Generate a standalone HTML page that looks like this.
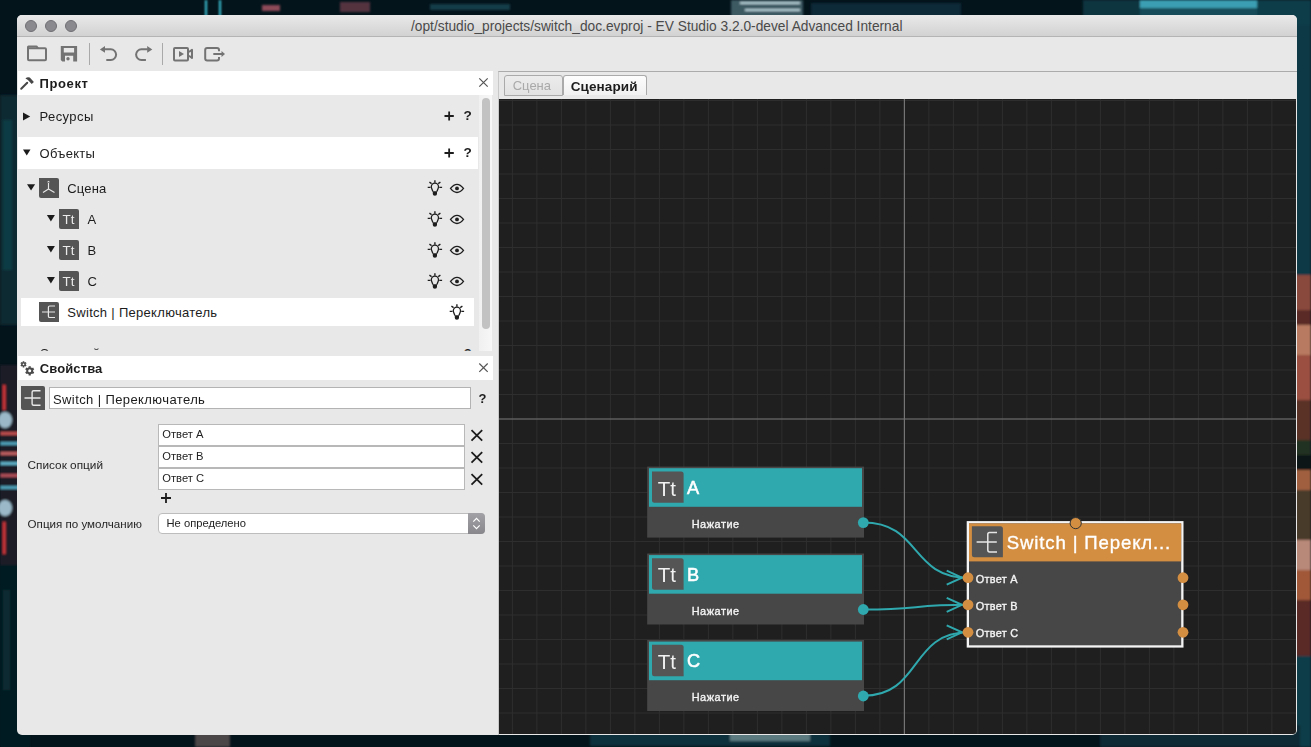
<!DOCTYPE html>
<html><head><meta charset="utf-8">
<style>
*{margin:0;padding:0;box-sizing:border-box}
html,body{width:1311px;height:747px;overflow:hidden}
body{position:relative;font-family:"Liberation Sans",sans-serif;background:#04151c}
.a{position:absolute}
.t{position:absolute;white-space:nowrap;line-height:1;color:#1c1c1c}
svg{position:absolute;left:0;top:0;overflow:visible}
</style></head><body>
<!-- background photo approximation -->
<svg width="1311" height="747" style="left:0;top:0">
  <defs>
    <filter id="blur2" x="-10%" y="-10%" width="120%" height="120%"><feGaussianBlur stdDeviation="1.2"/></filter>
  </defs>
  <rect width="1311" height="747" fill="#04141b"/>
  <g filter="url(#blur2)">
    <!-- left strip -->
    <rect x="0" y="95" width="30" height="230" fill="#0a2a33"/>
    <rect x="3" y="120" width="9" height="150" fill="#124a58" opacity="0.5"/>
    <rect x="0" y="365" width="30" height="200" fill="#1a1e28"/>
    <rect x="3" y="385" width="2.5" height="25" fill="#d83838"/>
    <ellipse cx="5" cy="420" rx="7" ry="8" fill="#9ab8c8"/>
    <rect x="0" y="432" width="30" height="3" fill="#c05050"/>
    <rect x="0" y="442" width="30" height="3" fill="#50a0b8"/>
    <rect x="0" y="452" width="30" height="3" fill="#c06060"/>
    <rect x="0" y="462" width="30" height="3" fill="#60b0c8"/>
    <rect x="0" y="474" width="30" height="3" fill="#b05058"/>
    <rect x="0" y="486" width="30" height="3" fill="#50a0b8"/>
    <ellipse cx="5" cy="508" rx="7" ry="8" fill="#9ab8c8"/>
    <rect x="3" y="522" width="2.5" height="32" fill="#d83838"/>
    <rect x="0" y="565" width="30" height="182" fill="#051a21"/>
    <rect x="3" y="590" width="7" height="100" fill="#0e3a46" opacity="0.5"/>
    <!-- right strip -->
    <rect x="1285" y="0" width="26" height="275" fill="#0c3844"/>
    <rect x="1285" y="275" width="26" height="35" fill="#8a4a3c"/>
    <rect x="1285" y="310" width="26" height="15" fill="#5a2a28"/>
    <rect x="1285" y="325" width="26" height="30" fill="#b87a60"/>
    <rect x="1285" y="355" width="26" height="45" fill="#9a5040"/>
    <rect x="1285" y="400" width="26" height="40" fill="#5a3028"/>
    <rect x="1285" y="440" width="26" height="15" fill="#203024"/>
    <rect x="1285" y="455" width="26" height="15" fill="#101818"/>
    <rect x="1285" y="470" width="26" height="20" fill="#a06040"/>
    <rect x="1285" y="490" width="26" height="50" fill="#4a3a2a"/>
    <rect x="1285" y="540" width="26" height="30" fill="#b88878"/>
    <rect x="1285" y="570" width="26" height="30" fill="#a05838"/>
    <rect x="1285" y="600" width="26" height="56" fill="#5a2a28"/>
    <rect x="1285" y="656" width="26" height="91" fill="#0d3c48"/>
    <!-- top strip -->
    <rect x="205" y="0" width="2" height="25" fill="#3cc8dc"/>
    <rect x="219" y="0" width="2" height="25" fill="#3cc8dc"/>
    <rect x="262" y="5" width="18" height="6" fill="#b05868" opacity="0.8"/>
    <rect x="340" y="2" width="30" height="10" fill="#8a4a58" opacity="0.6"/>
    <rect x="430" y="4" width="80" height="6" fill="#17505e" opacity="0.7"/>
    <rect x="731" y="0" width="72" height="25" fill="#3e5a64"/>
    <rect x="740" y="2" width="60" height="2" fill="#b8d0d8"/>
    <rect x="745" y="9" width="55" height="2" fill="#b8d0d8"/>
    <rect x="811" y="3" width="150" height="22" fill="#0c2c38"/>
    <rect x="1083" y="0" width="57" height="25" fill="#0d3540"/>
    <rect x="1140" y="0" width="117" height="8" fill="#3a9eb2"/>
    <rect x="1140" y="8" width="117" height="17" fill="#164c5a"/>
    <rect x="1257" y="0" width="54" height="25" fill="#0d3c48"/>
    <!-- bottom strip -->
    <rect x="195" y="725" width="35" height="22" fill="#6a5a5a" opacity="0.7"/>
    <rect x="590" y="725" width="240" height="21" fill="#0e303c"/>
    <rect x="730" y="725" width="80" height="16" fill="#5a7a80"/>
    <rect x="1100" y="725" width="200" height="22" fill="#0a2a34"/>
  </g>
</svg>

<!-- window -->
<div class="a" style="left:17px;top:15px;width:1280px;height:720px;background:#e8e8e8;border-radius:5px 5px 5px 5px;overflow:hidden">
  <div class="a" style="left:0;top:0;width:1280px;height:22px;background:linear-gradient(#e9e9e9,#d2d2d2);border-bottom:1px solid #b4b4b4"></div>
</div>

<!-- traffic lights -->
<div class="a" style="left:25px;top:20px;width:12px;height:12px;border-radius:50%;background:#8a898e;border:1px solid #706f74"></div>
<div class="a" style="left:45px;top:20px;width:12px;height:12px;border-radius:50%;background:#8a898e;border:1px solid #706f74"></div>
<div class="a" style="left:65px;top:20px;width:12px;height:12px;border-radius:50%;background:#8a898e;border:1px solid #706f74"></div>
<div class="t" style="left:411px;top:20px;font-size:13.75px;color:#4a4a4a">/opt/studio_projects/switch_doc.evproj - EV Studio 3.2.0-devel Advanced Internal</div>

<!-- toolbar icons -->
<svg width="1311" height="747" style="left:0;top:0">
  <g fill="none" stroke="#737373" stroke-width="2">
    <!-- folder -->
    <rect x="28" y="48.3" width="18" height="12" rx="1"/>
    <path d="M28 49 V47 Q28 46.5 28.5 46.5 H36.5 L38 48.3" stroke-linejoin="round"/>
    <!-- save -->
    <!-- undo -->
    <path d="M104.5 49.3 H110.8 A5.3 5.3 0 0 1 110.8 59.9 H106.3"/>
    <!-- redo -->
    <path d="M147.7 49.3 H141.4 A5.3 5.3 0 0 0 141.4 59.9 H145.9"/>
    <!-- video -->
    <rect x="174" y="47.9" width="14" height="12.6" rx="1"/>
    <path d="M189 52 L192 49.8 V58 L189 55.8" stroke-linejoin="round"/>
    <!-- export -->
    <path d="M219 51.2 V49.9 Q219 47.9 217 47.9 H207.2 Q205.2 47.9 205.2 49.9 V58.5 Q205.2 60.5 207.2 60.5 H217 Q219 60.5 219 58.5 V56.9"/>
    <path d="M213.3 54 H222"/>
  </g>
  <g fill="#737373">
    <path fill-rule="evenodd" d="M60.8 46 H77.1 V61.5 H73.2 V55.8 H65 V61.5 H62.3 L60.8 60 Z M63.8 48 H74.1 V52.4 H63.8 Z"/>
    <circle cx="68" cy="58.8" r="1.7"/>
    <path d="M99.9 49.4 L105 46 V52.8 Z"/>
    <path d="M152.3 49.4 L147.2 46 V52.8 Z"/>
    <path d="M179 51 L184 54 L179 56.9 Z"/>
    <path d="M225 54 L221.5 51 V57 Z"/>
  </g>
  <rect x="89" y="43" width="1" height="22" fill="#a9a9a9"/>
  <rect x="162" y="43" width="1" height="22" fill="#a9a9a9"/>
</svg>

<!-- ========== Project dock ========== -->
<div class="a" style="left:18px;top:71px;width:475px;height:24px;background:#fff"></div>
<div class="t" style="left:39.5px;top:76.9px;font-size:13px;font-weight:bold;letter-spacing:0.62px">Проект</div>
<div class="a" style="left:18px;top:95px;width:461px;height:42px;background:#e9e9e9"></div>
<div class="a" style="left:18px;top:137px;width:460px;height:32px;background:#fff"></div>
<div class="a" style="left:479px;top:95px;width:13px;height:256px;background:linear-gradient(90deg,#f0f0f0,#f7f7f7)"></div>
<div class="a" style="left:482.2px;top:98px;width:8px;height:231px;border-radius:4px;background:#c2c2c2"></div>
<div class="a" style="left:21px;top:298px;width:453px;height:28px;background:#fff"></div>

<div class="t" style="left:463.6px;top:109.2px;font-size:13.6px;font-weight:bold">?</div>
<div class="t" style="left:463.6px;top:146.2px;font-size:13.6px;font-weight:bold">?</div>
<div class="t" style="left:39.5px;top:110px;font-size:13px;letter-spacing:0.42px">Ресурсы</div>
<div class="t" style="left:39.5px;top:147px;font-size:13px;letter-spacing:0.3px">Объекты</div>
<div class="t" style="left:67.3px;top:181.9px;font-size:13px;letter-spacing:0.15px">Сцена</div>
<div class="t" style="left:87.4px;top:213px;font-size:13px">A</div>
<div class="t" style="left:87.4px;top:244px;font-size:13px">B</div>
<div class="t" style="left:87.4px;top:275px;font-size:13px">C</div>
<div class="t" style="left:67.3px;top:306px;font-size:13px;letter-spacing:0.3px">Switch | Переключатель</div>
<div class="t" style="left:39.5px;top:346.5px;font-size:13px;letter-spacing:0.05px;clip-path:inset(0 0 8.7px 0)">Сценарий</div>
<div class="t" style="left:463.8px;top:346.5px;font-size:13px;font-weight:bold;clip-path:inset(0 0 8.7px 0)">?</div>

<svg width="1311" height="747">
  <!-- hammer -->
  <g stroke="#474747" fill="none" stroke-linecap="round">
    <path d="M21.2 88.8 L27.2 82.8" stroke-width="2"/>
  </g>
  <g fill="#474747">
    <path d="M25.4 78.4 Q27.6 76.4 29.8 77.6 L33.9 82.1 L31.7 84.1 L27.9 80.1 Q26.9 79.2 25.4 78.4 Z"/>
  </g>
  <!-- close x -->
  <g stroke="#555" stroke-width="1.2">
    <path d="M479.3 78.3 L487.7 86.7 M487.7 78.3 L479.3 86.7"/>
  </g>
  <!-- plus ? -->
  <g stroke="#1c1c1c" stroke-width="1.8">
    <path d="M444.5 116 H453.8 M449.15 111.4 V120.6"/>
    <path d="M444.5 153 H453.8 M449.15 148.4 V157.6"/>
    <path d="M161 498 H171 M166 493 V503"/>
  </g>
  <!-- triangles -->
  <g fill="#1c1c1c">
    <path d="M23 112.5 L30.2 116.5 L23 120.5 Z"/>
    <path d="M23 149.6 L30.5 149.6 L26.75 155.5 Z"/>
    <path d="M27 184.3 L35.1 184.3 L31.05 190.6 Z"/>
    <path d="M46.9 215 L54.9 215 L50.9 221.4 Z"/>
    <path d="M46.9 246 L54.9 246 L50.9 252.4 Z"/>
    <path d="M46.9 277 L54.9 277 L50.9 283.4 Z"/>
  </g>
  <!-- tree icons -->
  <path d="M39 178 H57 Q59 178 59 180 V198 H41 Q39 198 39 196 Z" fill="#555555"/><path d="M59 209 H77 Q79 209 79 211 V229 H61 Q59 229 59 227 Z" fill="#555555"/><path d="M59 240 H77 Q79 240 79 242 V260 H61 Q59 260 59 258 Z" fill="#555555"/><path d="M59 271 H77 Q79 271 79 273 V291 H61 Q59 291 59 289 Z" fill="#555555"/><path d="M39 302 H57 Q59 302 59 304 V322 H41 Q39 322 39 320 Z" fill="#555555"/><path d="M21 386 H43 Q45 386 45 388 V410 H23 Q21 410 21 408 Z" fill="#555555"/>
  <g stroke="#e8e8e8" stroke-width="1" fill="none">
    <path d="M48.5 189 V183 M48.5 189 L43 192.5 M48.5 189 L54.5 192.5" stroke-width="1.15"/>
    <path d="M42 312 H55 M55 306 H49.7 Q48.4 306 48.4 307.3 V316.2 Q48.4 317.5 49.7 317.5 H55" stroke-width="1.2"/>
    <path d="M24.5 398 H40.5 M40.5 390.8 H33.6 Q32.1 390.8 32.1 392.3 V403.7 Q32.1 405.2 33.6 405.2 H40.5" stroke-width="1.4"/>
  </g>
  <path d="M46.9 182.2 L48.5 180.8 L50.1 182.2 Z" fill="#e8e8e8"/>
  <g fill="#ebebeb" font-family="Liberation Sans" font-size="13.3" >
    <text x="62.6" y="224.4">Tt</text>
    <text x="62.6" y="255.4">Tt</text>
    <text x="62.6" y="286.4">Tt</text>
  </g>
  <!-- bulbs & eyes -->
  <g id="be" stroke="#1e1e1e" fill="none" stroke-width="1.3"><path d="M434.9 180.2 V182.7 M429.4 182.2 L431.59999999999997 183.6 M440.4 182.2 L438.2 183.6 M427.7 187.39999999999998 H430.5 M442.09999999999997 187.39999999999998 H439.29999999999995" stroke-width="1.4"/><path d="M432.9 191.39999999999998 L431.7 188.5 Q431.29999999999995 187.6 431.29999999999995 186.7 A3.6 3.6 0 0 1 438.5 186.7 Q438.5 187.6 438.09999999999997 188.5 L436.9 191.39999999999998" stroke-width="1.3"/><path d="M432.79999999999995 191.29999999999998 H437.0 V194.1 Q437.0 195.79999999999998 434.9 195.79999999999998 Q432.79999999999995 195.79999999999998 432.79999999999995 194.1 Z" fill="#1e1e1e" stroke="none"/><path d="M450.5 188.4 Q457 180.20000000000002 463.5 188.4 Q457 196.6 450.5 188.4 Z" stroke-width="1.3"/><circle cx="457" cy="188.4" r="1.9" fill="#1e1e1e" stroke="none"/><path d="M434.9 211.2 V213.7 M429.4 213.2 L431.59999999999997 214.6 M440.4 213.2 L438.2 214.6 M427.7 218.39999999999998 H430.5 M442.09999999999997 218.39999999999998 H439.29999999999995" stroke-width="1.4"/><path d="M432.9 222.39999999999998 L431.7 219.5 Q431.29999999999995 218.6 431.29999999999995 217.7 A3.6 3.6 0 0 1 438.5 217.7 Q438.5 218.6 438.09999999999997 219.5 L436.9 222.39999999999998" stroke-width="1.3"/><path d="M432.79999999999995 222.29999999999998 H437.0 V225.1 Q437.0 226.79999999999998 434.9 226.79999999999998 Q432.79999999999995 226.79999999999998 432.79999999999995 225.1 Z" fill="#1e1e1e" stroke="none"/><path d="M450.5 219.4 Q457 211.20000000000002 463.5 219.4 Q457 227.6 450.5 219.4 Z" stroke-width="1.3"/><circle cx="457" cy="219.4" r="1.9" fill="#1e1e1e" stroke="none"/><path d="M434.9 242.2 V244.7 M429.4 244.2 L431.59999999999997 245.6 M440.4 244.2 L438.2 245.6 M427.7 249.39999999999998 H430.5 M442.09999999999997 249.39999999999998 H439.29999999999995" stroke-width="1.4"/><path d="M432.9 253.39999999999998 L431.7 250.5 Q431.29999999999995 249.6 431.29999999999995 248.7 A3.6 3.6 0 0 1 438.5 248.7 Q438.5 249.6 438.09999999999997 250.5 L436.9 253.39999999999998" stroke-width="1.3"/><path d="M432.79999999999995 253.29999999999998 H437.0 V256.09999999999997 Q437.0 257.8 434.9 257.8 Q432.79999999999995 257.8 432.79999999999995 256.09999999999997 Z" fill="#1e1e1e" stroke="none"/><path d="M450.5 250.4 Q457 242.20000000000002 463.5 250.4 Q457 258.6 450.5 250.4 Z" stroke-width="1.3"/><circle cx="457" cy="250.4" r="1.9" fill="#1e1e1e" stroke="none"/><path d="M434.9 273.2 V275.7 M429.4 275.2 L431.59999999999997 276.59999999999997 M440.4 275.2 L438.2 276.59999999999997 M427.7 280.4 H430.5 M442.09999999999997 280.4 H439.29999999999995" stroke-width="1.4"/><path d="M432.9 284.4 L431.7 281.5 Q431.29999999999995 280.59999999999997 431.29999999999995 279.7 A3.6 3.6 0 0 1 438.5 279.7 Q438.5 280.59999999999997 438.09999999999997 281.5 L436.9 284.4" stroke-width="1.3"/><path d="M432.79999999999995 284.3 H437.0 V287.09999999999997 Q437.0 288.8 434.9 288.8 Q432.79999999999995 288.8 432.79999999999995 287.09999999999997 Z" fill="#1e1e1e" stroke="none"/><path d="M450.5 281.4 Q457 273.2 463.5 281.4 Q457 289.59999999999997 450.5 281.4 Z" stroke-width="1.3"/><circle cx="457" cy="281.4" r="1.9" fill="#1e1e1e" stroke="none"/><path d="M456.9 304.2 V306.7 M451.4 306.2 L453.59999999999997 307.59999999999997 M462.4 306.2 L460.2 307.59999999999997 M449.7 311.4 H452.5 M464.09999999999997 311.4 H461.29999999999995" stroke-width="1.4"/><path d="M454.9 315.4 L453.7 312.5 Q453.29999999999995 311.59999999999997 453.29999999999995 310.7 A3.6 3.6 0 0 1 460.5 310.7 Q460.5 311.59999999999997 460.09999999999997 312.5 L458.9 315.4" stroke-width="1.3"/><path d="M454.79999999999995 315.3 H459.0 V318.09999999999997 Q459.0 319.8 456.9 319.8 Q454.79999999999995 319.8 454.79999999999995 318.09999999999997 Z" fill="#1e1e1e" stroke="none"/></g>
</svg>

<!-- ========== Properties dock ========== -->
<div class="a" style="left:18px;top:356px;width:475px;height:24px;background:#fff"></div>
<div class="t" style="left:39.8px;top:362px;font-size:13px;font-weight:bold;letter-spacing:0.1px">Свойства</div>
<div class="a" style="left:49px;top:387px;width:422px;height:22px;background:#fff;border:1px solid #b3b3b3"></div>
<div class="t" style="left:53px;top:393px;font-size:13px;letter-spacing:0.4px">Switch | Переключатель</div>
<div class="t" style="left:478.5px;top:392px;font-size:13px;font-weight:bold">?</div>
<div class="t" style="left:27.6px;top:460px;font-size:11.8px;color:#262626">Список опций</div>
<div class="t" style="left:27.6px;top:518.1px;font-size:11.6px;color:#262626">Опция по умолчанию</div>
<div class="a" style="left:158px;top:424px;width:307px;height:22px;background:#fff;border:1px solid #b8b8b8"></div>
<div class="a" style="left:158px;top:446px;width:307px;height:22px;background:#fff;border:1px solid #b8b8b8"></div>
<div class="a" style="left:158px;top:468px;width:307px;height:22px;background:#fff;border:1px solid #b8b8b8"></div>
<div class="t" style="left:162.3px;top:429.2px;font-size:11.2px;color:#222">Ответ A</div>
<div class="t" style="left:162.3px;top:451.2px;font-size:11.2px;color:#222">Ответ B</div>
<div class="t" style="left:162.3px;top:473.2px;font-size:11.2px;color:#222">Ответ C</div>
<div class="a" style="left:157.5px;top:513.2px;width:327px;height:20.5px;background:#fff;border:1px solid #bdbdbd;border-radius:4px"></div>
<div class="a" style="left:468.2px;top:513.2px;width:16.5px;height:20.5px;border-radius:0 4px 4px 0;background:linear-gradient(#a2a2a6,#88888c)"></div>
<div class="t" style="left:166.5px;top:518px;font-size:11.2px;color:#222">Не определено</div>

<svg width="1311" height="747">
  <path d="M479.3 363.5 L487.7 371.9 M487.7 363.5 L479.3 371.9" stroke="#555" stroke-width="1.2"/>
  <!-- gear -->
  <circle cx="23.5" cy="364.3" r="2.3" fill="#4a4a4a"/><path d="M23.50 362.50 L23.50 361.20 M21.94 363.40 L20.82 362.75 M21.94 365.20 L20.82 365.85 M23.50 366.10 L23.50 367.40 M25.06 365.20 L26.18 365.85 M25.06 363.40 L26.18 362.75 " stroke="#4a4a4a" stroke-width="1.6" stroke-linecap="butt"/><circle cx="23.5" cy="364.3" r="0.85" fill="#fff"/><circle cx="29.7" cy="370.8" r="3.5" fill="#4a4a4a"/><path d="M29.70 367.80 L29.70 366.20 M27.10 369.30 L25.72 368.50 M27.10 372.30 L25.72 373.10 M29.70 373.80 L29.70 375.40 M32.30 372.30 L33.68 373.10 M32.30 369.30 L33.68 368.50 " stroke="#4a4a4a" stroke-width="2.2" stroke-linecap="butt"/><circle cx="29.7" cy="370.8" r="1.5" fill="#fff"/>
  <!-- x buttons -->
  <g stroke="#1c1c1c" stroke-width="1.8">
    <path d="M471.5 430.2 L482.2 440.6 M482.2 430.2 L471.5 440.6"/>
    <path d="M471.5 452.2 L482.2 462.6 M482.2 452.2 L471.5 462.6"/>
    <path d="M471.5 474.2 L482.2 484.6 M482.2 474.2 L471.5 484.6"/>
  </g>
  <!-- stepper arrows -->
  <g stroke="#fff" stroke-width="1.2" fill="none">
    <path d="M473.3 521.6 L476.5 518.4 L479.7 521.6"/>
    <path d="M473.3 525.4 L476.5 528.6 L479.7 525.4"/>
  </g>
</svg>

<!-- ========== Tab widget / Canvas ========== -->
<div class="a" style="left:498px;top:71px;width:799px;height:664px;border-top:1px solid #ababab;border-left:1px solid #c8c8c8"></div>
<div class="a" style="left:504px;top:75px;width:59px;height:20.5px;border:1px solid #aaaaaa;border-radius:3px 3px 0 0;background:linear-gradient(#ececec,#e2e2e2)"></div>
<div class="a" style="left:562.5px;top:75px;width:84px;height:19.5px;border:1px solid #aaaaaa;border-bottom:none;border-radius:3px 3px 0 0;background:linear-gradient(#fdfdfd,#f0f0f0)"></div>
<div class="t" style="left:512.7px;top:79.4px;font-size:13px;color:#a9a9a9">Сцена</div>
<div class="t" style="left:570.7px;top:80px;font-size:13.5px;font-weight:bold;color:#1c1c1c;letter-spacing:0.1px">Сценарий</div>
<div class="a" style="left:499px;top:99px;width:797px;height:635px;background:#1f1f1f;border-radius:0 0 3px 0;overflow:hidden">
  <svg id="grid" width="797" height="635"><line x1="13.40" y1="0" x2="13.40" y2="635" stroke="#2e2e2e" stroke-width="1"/><line x1="37.90" y1="0" x2="37.90" y2="635" stroke="#2e2e2e" stroke-width="1"/><line x1="62.40" y1="0" x2="62.40" y2="635" stroke="#2e2e2e" stroke-width="1"/><line x1="86.90" y1="0" x2="86.90" y2="635" stroke="#2e2e2e" stroke-width="1"/><line x1="111.40" y1="0" x2="111.40" y2="635" stroke="#2e2e2e" stroke-width="1"/><line x1="135.90" y1="0" x2="135.90" y2="635" stroke="#2e2e2e" stroke-width="1"/><line x1="160.40" y1="0" x2="160.40" y2="635" stroke="#2e2e2e" stroke-width="1"/><line x1="184.90" y1="0" x2="184.90" y2="635" stroke="#2e2e2e" stroke-width="1"/><line x1="209.40" y1="0" x2="209.40" y2="635" stroke="#2e2e2e" stroke-width="1"/><line x1="233.90" y1="0" x2="233.90" y2="635" stroke="#2e2e2e" stroke-width="1"/><line x1="258.40" y1="0" x2="258.40" y2="635" stroke="#2e2e2e" stroke-width="1"/><line x1="282.90" y1="0" x2="282.90" y2="635" stroke="#2e2e2e" stroke-width="1"/><line x1="307.40" y1="0" x2="307.40" y2="635" stroke="#2e2e2e" stroke-width="1"/><line x1="331.90" y1="0" x2="331.90" y2="635" stroke="#2e2e2e" stroke-width="1"/><line x1="356.40" y1="0" x2="356.40" y2="635" stroke="#2e2e2e" stroke-width="1"/><line x1="380.90" y1="0" x2="380.90" y2="635" stroke="#2e2e2e" stroke-width="1"/><line x1="429.90" y1="0" x2="429.90" y2="635" stroke="#2e2e2e" stroke-width="1"/><line x1="454.40" y1="0" x2="454.40" y2="635" stroke="#2e2e2e" stroke-width="1"/><line x1="478.90" y1="0" x2="478.90" y2="635" stroke="#2e2e2e" stroke-width="1"/><line x1="503.40" y1="0" x2="503.40" y2="635" stroke="#2e2e2e" stroke-width="1"/><line x1="527.90" y1="0" x2="527.90" y2="635" stroke="#2e2e2e" stroke-width="1"/><line x1="552.40" y1="0" x2="552.40" y2="635" stroke="#2e2e2e" stroke-width="1"/><line x1="576.90" y1="0" x2="576.90" y2="635" stroke="#2e2e2e" stroke-width="1"/><line x1="601.40" y1="0" x2="601.40" y2="635" stroke="#2e2e2e" stroke-width="1"/><line x1="625.90" y1="0" x2="625.90" y2="635" stroke="#2e2e2e" stroke-width="1"/><line x1="650.40" y1="0" x2="650.40" y2="635" stroke="#2e2e2e" stroke-width="1"/><line x1="674.90" y1="0" x2="674.90" y2="635" stroke="#2e2e2e" stroke-width="1"/><line x1="699.40" y1="0" x2="699.40" y2="635" stroke="#2e2e2e" stroke-width="1"/><line x1="723.90" y1="0" x2="723.90" y2="635" stroke="#2e2e2e" stroke-width="1"/><line x1="748.40" y1="0" x2="748.40" y2="635" stroke="#2e2e2e" stroke-width="1"/><line x1="772.90" y1="0" x2="772.90" y2="635" stroke="#2e2e2e" stroke-width="1"/><line x1="797.40" y1="0" x2="797.40" y2="635" stroke="#2e2e2e" stroke-width="1"/><line x1="0" y1="1.50" x2="797" y2="1.50" stroke="#2e2e2e" stroke-width="1"/><line x1="0" y1="26.00" x2="797" y2="26.00" stroke="#2e2e2e" stroke-width="1"/><line x1="0" y1="50.50" x2="797" y2="50.50" stroke="#2e2e2e" stroke-width="1"/><line x1="0" y1="75.00" x2="797" y2="75.00" stroke="#2e2e2e" stroke-width="1"/><line x1="0" y1="99.50" x2="797" y2="99.50" stroke="#2e2e2e" stroke-width="1"/><line x1="0" y1="124.00" x2="797" y2="124.00" stroke="#2e2e2e" stroke-width="1"/><line x1="0" y1="148.50" x2="797" y2="148.50" stroke="#2e2e2e" stroke-width="1"/><line x1="0" y1="173.00" x2="797" y2="173.00" stroke="#2e2e2e" stroke-width="1"/><line x1="0" y1="197.50" x2="797" y2="197.50" stroke="#2e2e2e" stroke-width="1"/><line x1="0" y1="222.00" x2="797" y2="222.00" stroke="#2e2e2e" stroke-width="1"/><line x1="0" y1="246.50" x2="797" y2="246.50" stroke="#2e2e2e" stroke-width="1"/><line x1="0" y1="271.00" x2="797" y2="271.00" stroke="#2e2e2e" stroke-width="1"/><line x1="0" y1="295.50" x2="797" y2="295.50" stroke="#2e2e2e" stroke-width="1"/><line x1="0" y1="344.50" x2="797" y2="344.50" stroke="#2e2e2e" stroke-width="1"/><line x1="0" y1="369.00" x2="797" y2="369.00" stroke="#2e2e2e" stroke-width="1"/><line x1="0" y1="393.50" x2="797" y2="393.50" stroke="#2e2e2e" stroke-width="1"/><line x1="0" y1="418.00" x2="797" y2="418.00" stroke="#2e2e2e" stroke-width="1"/><line x1="0" y1="442.50" x2="797" y2="442.50" stroke="#2e2e2e" stroke-width="1"/><line x1="0" y1="467.00" x2="797" y2="467.00" stroke="#2e2e2e" stroke-width="1"/><line x1="0" y1="491.50" x2="797" y2="491.50" stroke="#2e2e2e" stroke-width="1"/><line x1="0" y1="516.00" x2="797" y2="516.00" stroke="#2e2e2e" stroke-width="1"/><line x1="0" y1="540.50" x2="797" y2="540.50" stroke="#2e2e2e" stroke-width="1"/><line x1="0" y1="565.00" x2="797" y2="565.00" stroke="#2e2e2e" stroke-width="1"/><line x1="0" y1="589.50" x2="797" y2="589.50" stroke="#2e2e2e" stroke-width="1"/><line x1="0" y1="614.00" x2="797" y2="614.00" stroke="#2e2e2e" stroke-width="1"/><line x1="0" y1="320.00" x2="797" y2="320.00" stroke="#5e5e5e" stroke-width="1.6"/><line x1="405.40" y1="0" x2="405.40" y2="635" stroke="#747474" stroke-width="1.2"/></svg>
</div>

<svg id="nodes" width="1311" height="747"><rect x="647.2" y="466.6" width="216.8" height="71" fill="#474747"/><rect x="649.0" y="468.20000000000005" width="213" height="38.6" fill="#2fa8ae"/><path d="M652.0 471.40000000000003 H681.1 Q683.6 471.40000000000003 683.6 473.90000000000003 V502.8 H654.5 Q652.0 502.8 652.0 500.3 Z" fill="#555"/><text x="657.8000000000001" y="495.5" font-size="20.5" fill="#f2f2f2" font-family="Liberation Sans">Tt</text><text x="687.0" y="494.0" font-size="18.2" fill="#fff" stroke="#fff" stroke-width="0.55" font-family="Liberation Sans">A</text><text x="691.7" y="528.0" font-size="10.9" fill="#f4f4f4" stroke="#f4f4f4" stroke-width="0.35" letter-spacing="0.55" font-family="Liberation Sans">Нажатие</text><circle cx="863.3" cy="522.6" r="5.4" fill="#2fa8ae"/><rect x="647.2" y="553.5" width="216.8" height="71" fill="#474747"/><rect x="649.0" y="555.1" width="213" height="38.6" fill="#2fa8ae"/><path d="M652.0 558.3 H681.1 Q683.6 558.3 683.6 560.8 V589.6999999999999 H654.5 Q652.0 589.6999999999999 652.0 587.1999999999999 Z" fill="#555"/><text x="657.8000000000001" y="582.4" font-size="20.5" fill="#f2f2f2" font-family="Liberation Sans">Tt</text><text x="687.0" y="580.9" font-size="18.2" fill="#fff" stroke="#fff" stroke-width="0.55" font-family="Liberation Sans">B</text><text x="691.7" y="614.9" font-size="10.9" fill="#f4f4f4" stroke="#f4f4f4" stroke-width="0.35" letter-spacing="0.55" font-family="Liberation Sans">Нажатие</text><circle cx="863.3" cy="609.5" r="5.4" fill="#2fa8ae"/><rect x="647.2" y="640.0" width="216.8" height="71" fill="#474747"/><rect x="649.0" y="641.6" width="213" height="38.6" fill="#2fa8ae"/><path d="M652.0 644.8 H681.1 Q683.6 644.8 683.6 647.3 V676.1999999999999 H654.5 Q652.0 676.1999999999999 652.0 673.6999999999999 Z" fill="#555"/><text x="657.8000000000001" y="668.9" font-size="20.5" fill="#f2f2f2" font-family="Liberation Sans">Tt</text><text x="687.0" y="667.4" font-size="18.2" fill="#fff" stroke="#fff" stroke-width="0.55" font-family="Liberation Sans">C</text><text x="691.7" y="701.4" font-size="10.9" fill="#f4f4f4" stroke="#f4f4f4" stroke-width="0.35" letter-spacing="0.55" font-family="Liberation Sans">Нажатие</text><circle cx="863.3" cy="696.0" r="5.4" fill="#2fa8ae"/><g stroke="#2fa8ae" stroke-width="2" fill="none"><path d="M863.3 522.6 C921.3 522.6 910 577.7 968 577.7"/><path d="M946.7 570.7 L962 577.7 L946.7 584.7"/><path d="M863.3 609.5 C921.3 609.5 910 604.8 968 604.8"/><path d="M946.7 597.8 L962 604.8 L946.7 611.8"/><path d="M863.3 695.8 C921.3 695.8 910 632.3 968 632.3"/><path d="M946.7 625.3 L962 632.3 L946.7 639.3"/></g><rect x="966.7" y="521.1" width="216.8" height="126.5" fill="#f4f4f4"/><rect x="969.0" y="523.4" width="212.20000000000002" height="121.9" fill="#474747"/><rect x="969.0" y="523.4" width="212.20000000000002" height="38" fill="#d48e41"/><path d="M971.9 526.3 H1000.4 Q1002.9 526.3 1002.9 528.8 V557.3 H974.4 Q971.9 557.3 971.9 554.8 Z" fill="#555"/><g stroke="#e6e6e6" stroke-width="1.5" fill="none"><path d="M976.6 542 H996.8 M997 532.5 H989.6 Q987.8 532.5 987.8 534.3 V550.1 Q987.8 551.9 989.6 551.9 H997"/></g><text x="1006.8" y="548.8" font-size="18.6" fill="#fff" stroke="#fff" stroke-width="0.35" font-family="Liberation Sans" letter-spacing="0.85">Switch | Перекл...</text><circle cx="1075.7" cy="523.1" r="5.6" fill="#d48e41" stroke="#333" stroke-width="1"/><circle cx="968" cy="577.7" r="5.4" fill="#d48e41"/><circle cx="1183" cy="577.7" r="5.4" fill="#d48e41"/><text x="975.7" y="582.6" font-size="10.9" fill="#f4f4f4" stroke="#f4f4f4" stroke-width="0.35" letter-spacing="0.3" font-family="Liberation Sans">Ответ A</text><circle cx="968" cy="604.8" r="5.4" fill="#d48e41"/><circle cx="1183" cy="604.8" r="5.4" fill="#d48e41"/><text x="975.7" y="609.6999999999999" font-size="10.9" fill="#f4f4f4" stroke="#f4f4f4" stroke-width="0.35" letter-spacing="0.3" font-family="Liberation Sans">Ответ B</text><circle cx="968" cy="632.3" r="5.4" fill="#d48e41"/><circle cx="1183" cy="632.3" r="5.4" fill="#d48e41"/><text x="975.7" y="637.1999999999999" font-size="10.9" fill="#f4f4f4" stroke="#f4f4f4" stroke-width="0.35" letter-spacing="0.3" font-family="Liberation Sans">Ответ C</text></svg>
</body></html>
